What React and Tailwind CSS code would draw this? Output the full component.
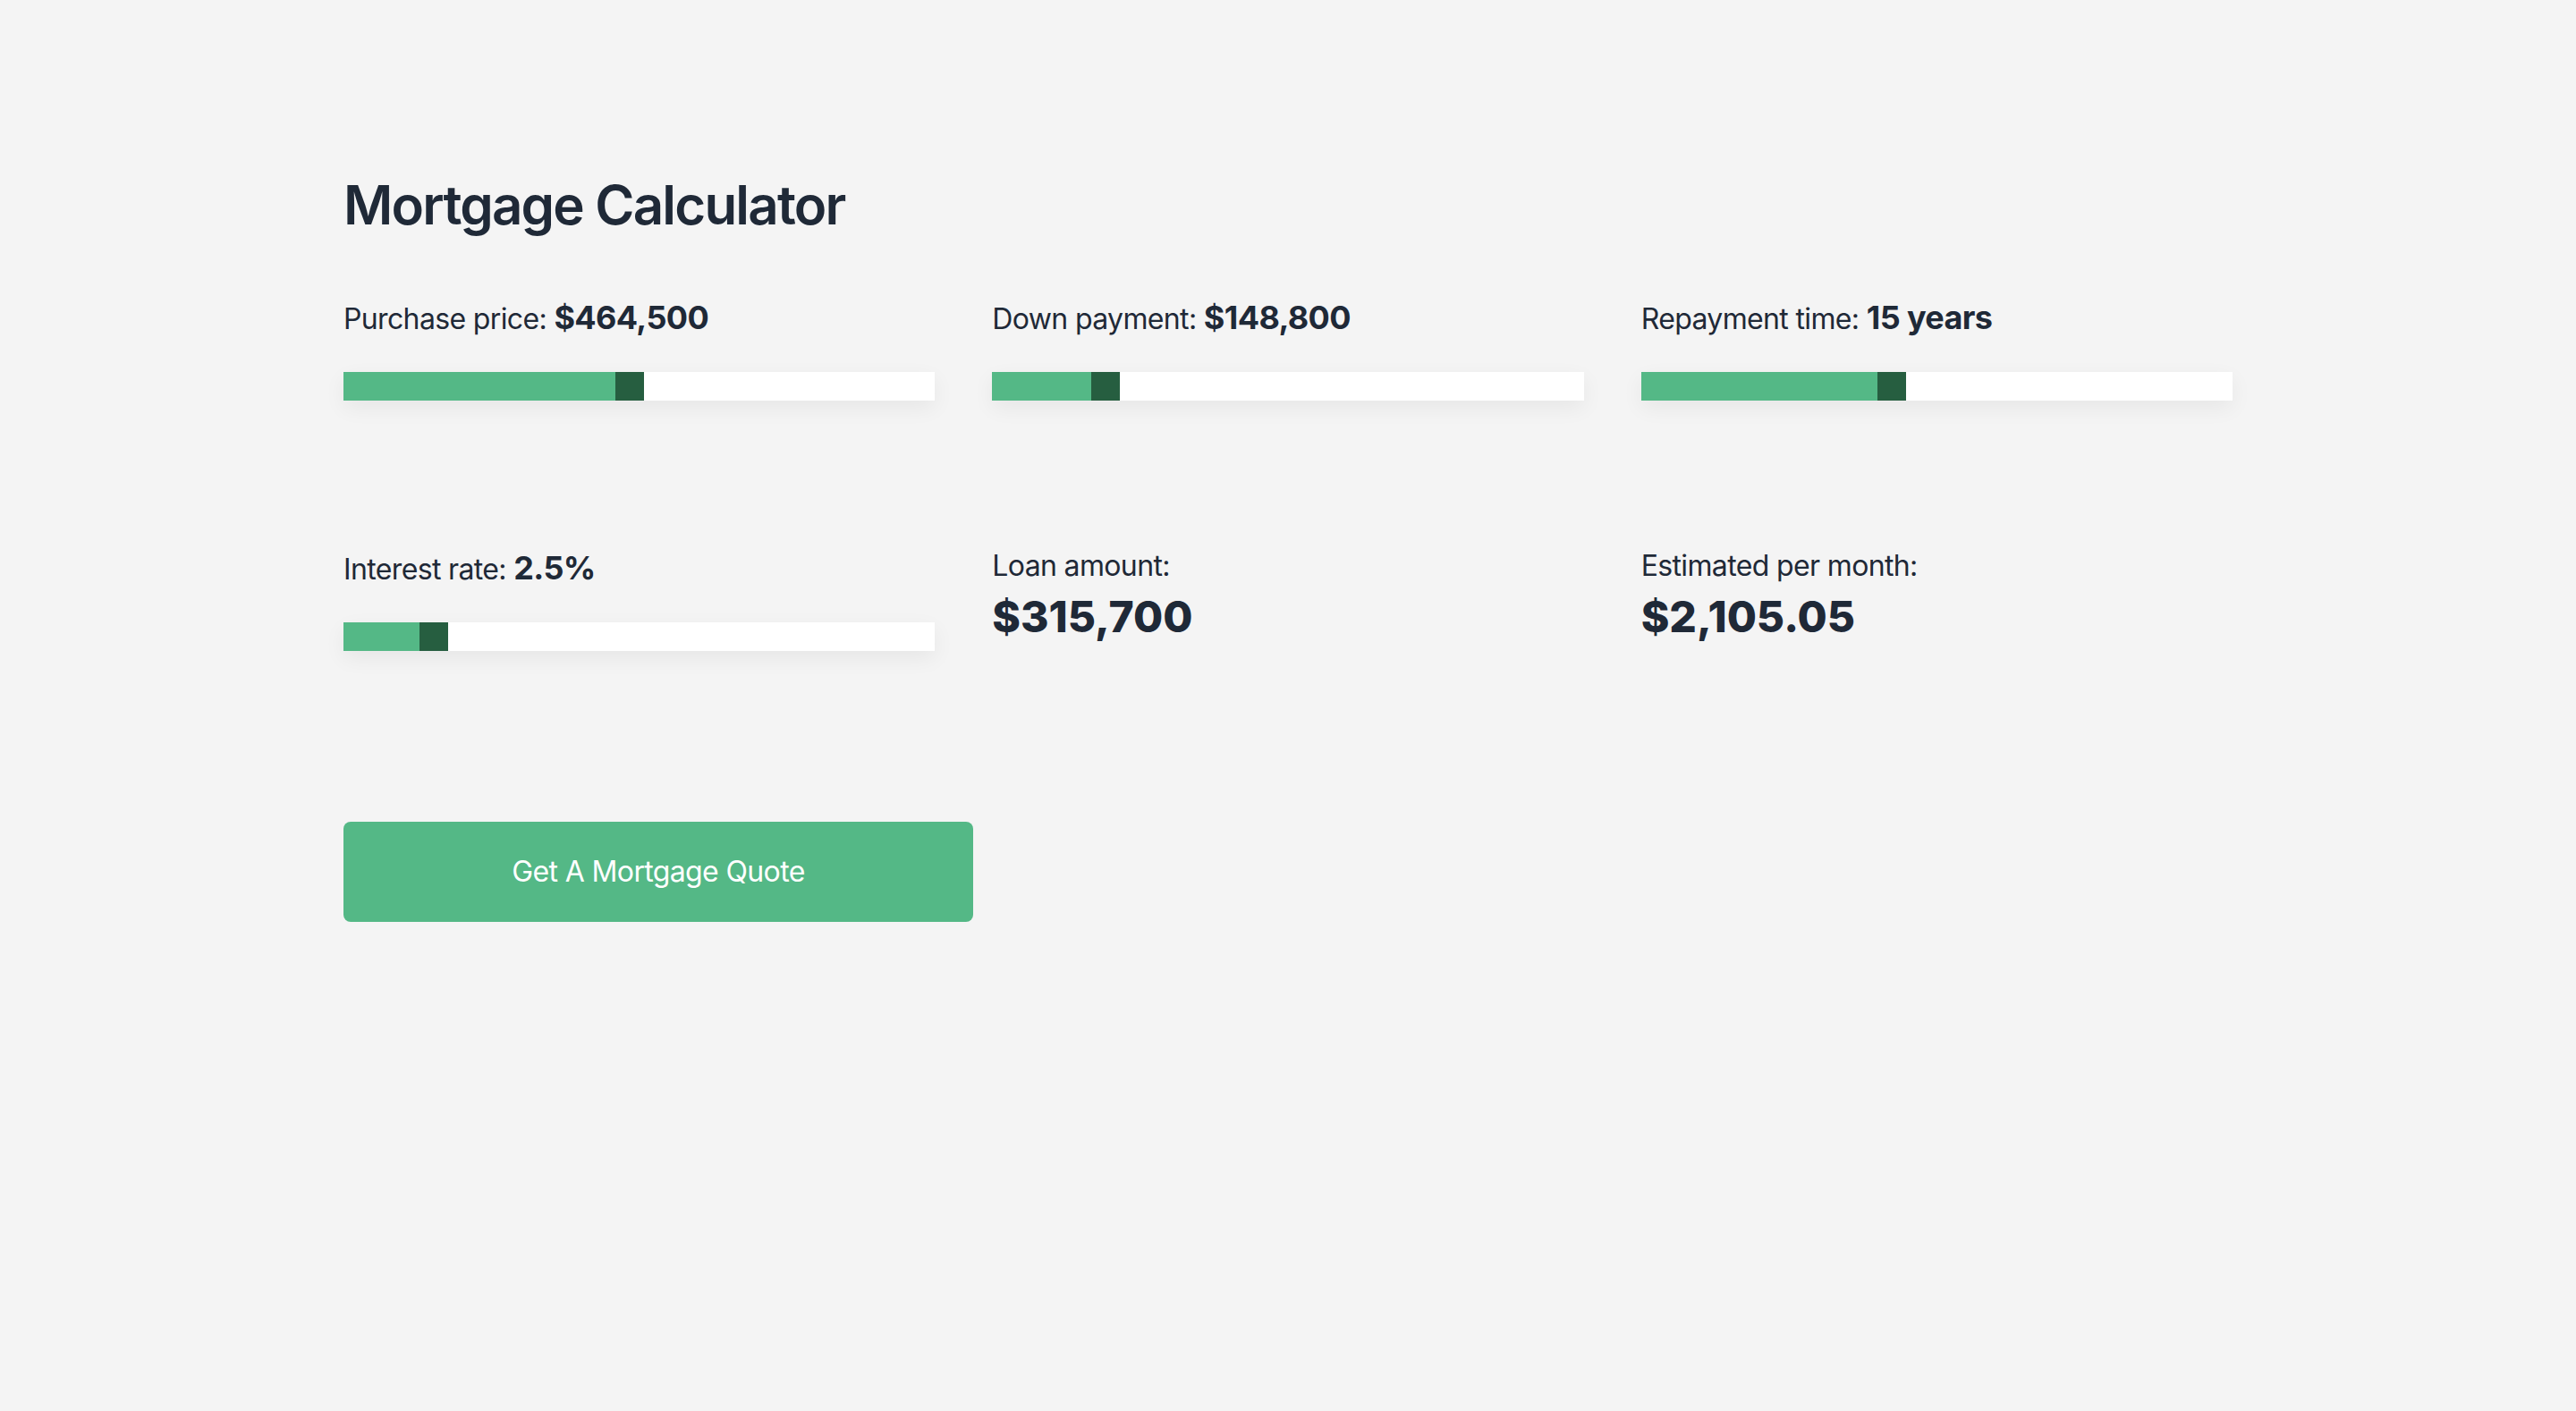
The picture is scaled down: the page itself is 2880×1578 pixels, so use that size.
import React from 'react';

const sliders = [
  { label: 'Purchase price:', value: '$464,500', fill: 45.9 },
  { label: 'Down payment:', value: '$148,800', fill: 16.7 },
  { label: 'Repayment time:', value: '15 years', fill: 39.9 },
  { label: 'Interest rate:', value: '2.5%', fill: 12.9 },
];

const Slider = ({ label, value, fill }) => (
  <div>
    <p className="text-[32px] leading-[56px] tracking-[-0.02em] text-[#1f2937]">
      {label} <span className="text-[36px] font-bold">{value}</span>
    </p>
    <div className="mt-[31px] flex h-[32px] w-full bg-white shadow-[0_8px_24px_rgba(0,0,0,0.06)]">
      <div className="h-full bg-[#54b886]" style={{ width: `${fill}%` }} />
      <div className="h-full w-[32px] bg-[#265e40]" />
    </div>
  </div>
);

const Stat = ({ label, value }) => (
  <div className="pt-[2px]">
    <p className="text-[32px] leading-[48px] tracking-[-0.02em] text-[#1f2937]">{label}</p>
    <p className="mt-[1px] text-[48px] leading-[64px] font-extrabold text-[#1f2937]">{value}</p>
  </div>
);

export default function App() {
  return (
    <div className="min-h-screen bg-[#f4f4f4] font-['Inter',sans-serif]">
      <div className="mx-auto w-[2112px] pt-[193px]">
        <h1 className="text-[60px] leading-[72px] font-semibold tracking-[-0.03em] text-[#1f2937]">
          Mortgage Calculator
        </h1>

        <div className="mt-[62px] grid grid-cols-3 gap-x-[64px] gap-y-[159px]">
          {sliders.slice(0, 3).map((s) => (
            <Slider key={s.label} {...s} />
          ))}
          <Slider {...sliders[3]} />
          <Stat label="Loan amount:" value="$315,700" />
          <Stat label="Estimated per month:" value="$2,105.05" />
        </div>

        <button className="mt-[191px] h-[112px] w-1/3 rounded-[8px] bg-[#54b886] text-[32px] tracking-[-0.02em] text-white">
          Get A Mortgage Quote
        </button>
      </div>
    </div>
  );
}
